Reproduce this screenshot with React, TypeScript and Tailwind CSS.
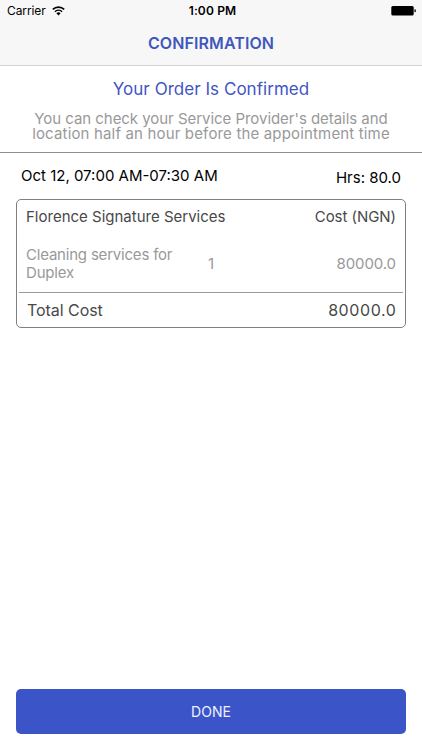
import React from 'react';

const StatusBar = () => {
    return (
        <div className="grid h-[22px] grid-cols-3 items-center pl-[7px] pr-[6px] text-black">
            <div className="flex items-center">
                <span className="text-[12px] leading-[22px] tracking-[-0.1px]">Carrier</span>
                {/* Wifi */}
                <svg className="ml-[6px] h-[10px] w-[13px]" viewBox="0 0 13 10" fill="none" stroke="#000">
                    <path d="M.8 3.4a8.2 8.2 0 0 1 11.4 0" strokeWidth="1.6" />
                    <path d="M2.9 5.7a5.2 5.2 0 0 1 7.2 0" strokeWidth="1.5" />
                    <path d="M6.5 9.4 4.4 7.3a3 3 0 0 1 4.2 0Z" fill="#000" stroke="none" />
                </svg>
            </div>
            <span className="pl-[2px] text-center text-[12px] font-semibold leading-[22px] tracking-[0.15px]">1:00 PM</span>
            {/* Battery */}
            <svg className="h-[12px] w-[26px] justify-self-end" viewBox="0 0 26 12">
                <rect x="1.3" y="1" width="22.4" height="9.6" rx="1.5" fill="#000" />
                <path d="M24.5 4.3h.5a.8.8 0 0 1 .8.8v1.4a.8.8 0 0 1-.8.8h-.5Z" fill="#000" />
            </svg>
        </div>
    );
};

const App = () => {
    return (
        <div className="flex h-[750px] w-[422px] flex-col overflow-hidden bg-white font-['Inter',sans-serif]">
            {/* Header */}
            <header className="h-[66px] border-b border-[#d3d3d3] bg-[#f7f7f7]">
                <StatusBar />
                <h1 className="text-center text-[16px] font-semibold leading-[43px] tracking-[0.1px] text-[#3f57bd]">CONFIRMATION</h1>
            </header>

            {/* Message */}
            <section className="h-[87px] border-b border-[#8e8e8e] pt-[12px] text-center">
                <h2 className="text-[17px] leading-[22px] tracking-[0.04px] text-[#3f55c4]">Your Order Is Confirmed</h2>
                <p className="mt-[11px] whitespace-nowrap text-[15px] leading-[15px] text-[#999]">
                    <span className="block tracking-[-0.04px]">You can check your Service Provider's details and</span>
                    <span className="block tracking-[0.16px]">location half an hour before the appointment time</span>
                </p>
            </section>

            {/* Date and hours */}
            <div className="flex h-[46px] justify-between pl-[21px] pr-[21px] text-[15px] leading-[20px] text-black">
                <span className="pt-[13px]">Oct 12, 07:00 AM-07:30 AM</span>
                <span className="pt-[15px]">Hrs: 80.0</span>
            </div>

            {/* Cost table */}
            <section className="mx-4 flex h-[129px] flex-col rounded-[5px] border border-[#808080] text-[15px] text-[#484848]">
                <div className="flex h-[34px] items-center justify-between px-[9px]">
                    <span>Florence Signature Services</span>
                    <span className="tracking-[-0.05px]">Cost (NGN)</span>
                </div>
                <div className="flex h-[58px] items-center px-[9px] pt-[2px] text-[#999]">
                    <span className="w-[182px] leading-[18px] tracking-[-0.2px]">
                        Cleaning services for
                        <br />
                        Duplex
                    </span>
                    <span>1</span>
                    <span className="ml-auto tracking-[-0.1px]">80000.0</span>
                </div>
                <div className="mx-[2px] flex grow items-center justify-between border-t border-[#999] pl-[8px] pr-[7px] text-[16px]">
                    <span className="tracking-[-0.05px]">Total Cost</span>
                    <span className="-mr-[0.5px] tracking-[0.6px]">80000.0</span>
                </div>
            </section>

            <button className="mx-4 mb-[16px] mt-auto h-[45px] rounded-[5px] bg-[#3b55c9] text-[14px] text-[#eef1ff]">DONE</button>
        </div>
    );
};

export default App;
